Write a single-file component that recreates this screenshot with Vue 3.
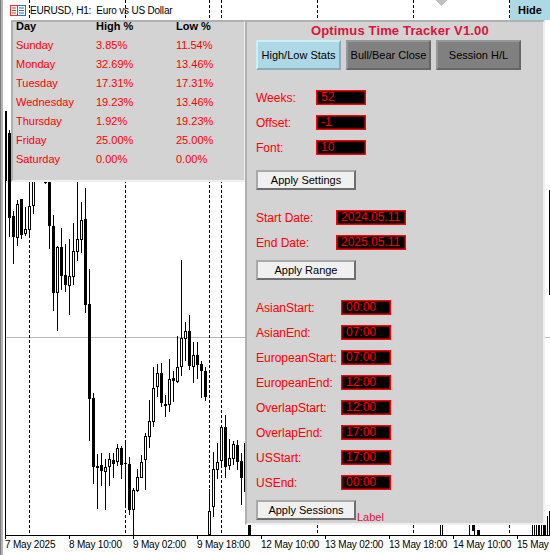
<script setup>
import { computed } from 'vue'

const raw = [
  [9,130,237,133,218,1],[13,211,264,216,237,1],[17,200,246,204,238,0],[21,199,239,199,235,1],
  [25,207,236,229,234,0],[29,175,235,206,230,0],[33,175,214,175,206,0],[45,181,184,181,183,1],
  [49,170,249,170,226,1],[53,215,311,226,293,1],[57,246,331,247,293,0],[61,228,290,247,276,1],
  [65,244,292,275,285,1],[69,239,315,276,286,0],[73,223,285,251,277,0],[77,175,261,239,252,0],
  [81,202,253,220,240,0],[85,188,313,219,305,1],[89,269,441,304,399,1],[93,393,484,398,467,1],
  [97,454,509,466,468,1],[101,453,486,465,471,1],[105,459,510,467,472,0],[109,453,486,459,467,0],
  [113,453,478,460,464,1],[117,444,466,448,462,0],[121,446,479,448,465,1],[125,443,505,463,464,1],
  [129,457,515,464,510,1],[133,488,535,490,510,0],[137,469,492,477,491,0],[141,455,478,462,478,0],
  [145,433,490,436,460,0],[149,400,448,421,437,0],[153,367,427,388,422,0],[157,364,397,373,387,0],
  [161,363,407,373,403,1],[165,395,417,404,406,1],[169,359,412,379,405,0],[173,371,402,378,381,1],
  [177,336,383,367,382,0],[181,260,376,338,367,0],[185,322,361,331,339,0],[189,315,370,331,366,1],
  [193,342,383,355,367,0],[197,342,379,355,365,1],[201,361,398,364,371,1],[205,367,401,371,397,1],
  [209,489,535,511,535,0],[213,452,517,469,507,0],[217,443,479,462,470,0],[221,425,468,427,461,0],
  [225,415,478,427,467,1],[229,439,470,458,466,0],[233,441,465,444,459,0],[237,440,470,445,462,1],
  [241,453,505,461,478,1],[245,436,498,443,492,1]
]
const candles = computed(() =>
  raw.map(([x, hi, lo, top, bottom, filled]) => ({ x, hi, lo, top, bottom, filled: !!filled }))
)
const dashes = [29, 125, 209, 221, 317, 413, 509]
const ticks = [5, 69, 133, 197, 261, 325, 389, 453, 517]
const axisLabels = ['7 May 2025', '8 May 10:00', '9 May 02:00', '9 May 18:00', '12 May 10:00', '13 May 02:00', '13 May 18:00', '14 May 10:00', '15 May']
const stripBars = [
  [248,525,3,10],[440,525,1,10],[442,525,1,10],[469,525,1,10],[472,525,3,6],[474,525,1,10],[477,530,3,5],
  [532,525,1,10],[534,525,1,10],[536,525,1,10],[538,525,2,10],[541,525,1,10],[543,525,3,10],[547,516,1,19],[549,511,1,24],[549,190,1,105]
]
const stats = [
  ['Sunday', '3.85%', '11.54%'],
  ['Monday', '32.69%', '13.46%'],
  ['Tuesday', '17.31%', '17.31%'],
  ['Wednesday', '19.23%', '13.46%'],
  ['Thursday', '1.92%', '19.23%'],
  ['Friday', '25.00%', '25.00%'],
  ['Saturday', '0.00%', '0.00%']
]
const settings = [['Weeks:', '52'], ['Offset:', '-1'], ['Font:', '10']]
const range = [['Start Date:', '2024.05.11'], ['End Date:', '2025.05.11']]
const sessions = [
  ['AsianStart:', '00:00'], ['AsianEnd:', '07:00'], ['EuropeanStart:', '07:00'], ['EuropeanEnd:', '12:00'],
  ['OverlapStart:', '12:00'], ['OverlapEnd:', '17:00'], ['USStart:', '17:00'], ['USEnd:', '00:00']
]
</script>

<template>
  <div class="screen">
    <svg class="chart" width="550" height="555" viewBox="0 0 550 555">
      <rect x="0" y="0" width="1" height="555" fill="#7a7a7a" />
      <rect x="1" y="0" width="2" height="555" fill="#b4b4b4" />
      <rect x="5" y="111" width="1" height="424" fill="#000" />
      <rect x="6" y="111" width="1" height="70" fill="#000" />
      <rect x="6" y="337" width="544" height="1" fill="#b8b8b8" />
      <line v-for="x in dashes" :key="x" :x1="x + 0.5" :x2="x + 0.5" y1="0" y2="535" stroke="#000" stroke-dasharray="3 2" />
      <g v-for="c in candles" :key="c.x">
        <rect :x="c.x" :y="c.hi" width="1" :height="c.lo - c.hi" fill="#000" />
        <rect v-if="c.filled" :x="c.x - 1" :y="c.top" width="3" :height="c.bottom - c.top" fill="#000" />
        <rect v-else :x="c.x - 0.5" :y="c.top + 0.5" width="2" :height="c.bottom - c.top - 1" fill="#fff" stroke="#000" />
      </g>
      <rect v-for="(b, i) in stripBars" :key="'b' + i" :x="b[0]" :y="b[1]" :width="b[2]" :height="b[3]" fill="#000" />
      <rect x="5" y="535" width="545" height="1" fill="#000" />
      <rect v-for="t in ticks" :key="'t' + t" :x="t" y="535" width="1" height="4" fill="#000" />
      <polygon points="436,0 447,0 441.5,6" fill="#c0c0c0" />
    </svg>

    <header class="symbol">
      <svg class="symbol-icon" width="16" height="11" viewBox="0 0 16 11">
        <rect x="0.5" y="0.5" width="7" height="10" fill="#fff" stroke="#e0392b" />
        <rect x="2" y="2.5" width="4" height="1" fill="#e0392b" />
        <rect x="2" y="5" width="4" height="1" fill="#e0392b" />
        <rect x="2" y="7.5" width="4" height="1" fill="#e0392b" />
        <rect x="7.5" y="0.5" width="8" height="10" fill="#fff" stroke="#2a6fc4" />
        <rect x="9" y="2.5" width="5" height="1" fill="#2a6fc4" />
        <rect x="9" y="5" width="5" height="1" fill="#2a6fc4" />
        <rect x="9" y="7.5" width="5" height="1" fill="#2a6fc4" />
      </svg>
      <span class="symbol-text">EURUSD, H1:&nbsp; Euro vs US Dollar</span>
    </header>

    <button class="hide">Hide</button>

    <section class="stats panel">
      <div class="stats-grid">
        <b>Day</b><b>High %</b><b>Low %</b>
        <template v-for="s in stats" :key="s[0]">
          <span>{{ s[0] }}</span><span>{{ s[1] }}</span><span>{{ s[2] }}</span>
        </template>
      </div>
    </section>

    <section class="tracker panel">
      <h1 class="title">Optimus Time Tracker V1.00</h1>
      <nav class="tabs">
        <button class="tab active">High/Low Stats</button>
        <button class="tab">Bull/Bear Close</button>
        <button class="tab">Session H/L</button>
      </nav>

      <div class="fields settings">
        <div v-for="f in settings" :key="f[0]" class="field">
          <label class="name">{{ f[0] }}</label><div class="value">{{ f[1] }}</div>
        </div>
      </div>
      <button class="apply after-settings">Apply Settings</button>

      <div class="fields range">
        <div v-for="f in range" :key="f[0]" class="field">
          <label class="name">{{ f[0] }}</label><div class="value wide">{{ f[1] }}</div>
        </div>
      </div>
      <button class="apply after-list">Apply Range</button>

      <div class="fields sessions">
        <div v-for="f in sessions" :key="f[0]" class="field">
          <label class="name">{{ f[0] }}</label><div class="value">{{ f[1] }}</div>
        </div>
      </div>
      <div class="last-row after-list">
        <button class="apply">Apply Sessions</button>
        <span class="note">Label</span>
      </div>
    </section>

    <footer class="time-axis">
      <span v-for="l in axisLabels" :key="l" class="time">{{ l }}</span>
    </footer>
  </div>
</template>

<style scoped>
.screen {
  position: relative;
  width: 550px;
  height: 555px;
  overflow: hidden;
  background: #fff;
  font-family: "Liberation Sans", Arial, sans-serif;
  font-size: 11px;
  color: #000;
}
.chart {
  position: absolute;
  left: 0;
  top: 0;
  shape-rendering: crispEdges;
}
.symbol {
  position: absolute;
  left: 10px;
  top: 5px;
  display: flex;
  align-items: center;
  gap: 4px;
  height: 11px;
}
.symbol-icon { display: block; flex: none; }
.symbol-text {
  font-size: 10px;
  line-height: 11px;
  letter-spacing: -0.2px;
  white-space: nowrap;
}
.hide {
  position: absolute;
  left: 510px;
  top: 0;
  width: 40px;
  height: 20px;
  padding: 0;
  border: 0;
  background: #add8e6;
  font: bold 11px "Liberation Sans", Arial, sans-serif;
  color: #000;
}
.panel {
  position: absolute;
  box-sizing: border-box;
  background: #d3d3d3;
  border-style: solid;
  border-width: 2px;
  border-color: #b0b0b0 #efefef #efefef #b0b0b0;
}
.stats {
  left: 11px;
  top: 20px;
  width: 235px;
  height: 162px;
  padding-left: 3px;
}
.stats-grid {
  display: grid;
  grid-template-columns: 80px 80px 60px;
  grid-auto-rows: 13px;
  row-gap: 6px;
  margin-top: -2px;
  line-height: 13px;
  color: #f00;
}
.stats-grid b { color: #000; }
.tracker {
  left: 245px;
  top: 20px;
  width: 300px;
  height: 505px;
  padding-left: 9px;
  display: flex;
  flex-direction: column;
  align-items: flex-start;
}
.title {
  margin: 0 0 0 55px;
  height: 18px;
  font-size: 13px;
  line-height: 18px;
  letter-spacing: 0.15px;
  font-weight: bold;
  color: #dc143c;
  white-space: nowrap;
}
.tabs {
  display: flex;
  gap: 5px;
}
.tab {
  box-sizing: border-box;
  width: 85px;
  height: 30px;
  padding: 0;
  border-style: solid;
  border-width: 2px;
  border-color: #979797 #666 #666 #979797;
  background: #808080;
  font: 11px "Liberation Sans", Arial, sans-serif;
  color: #000;
}
.tab.active {
  background: #add8e6;
  border-color: #c8f0f8 #8aacb8 #8aacb8 #c8f0f8;
}
.fields {
  display: flex;
  flex-direction: column;
  gap: 10px;
}
.settings { margin-top: 20px; --name: 60px; }
.range { margin-top: 20px; --name: 80px; }
.sessions { margin-top: 20px; --name: 85px; }
.field {
  display: flex;
  align-items: center;
  height: 15px;
}
.name {
  width: var(--name);
  flex: none;
  height: 15px;
  padding-top: 1px;
  box-sizing: border-box;
  font-size: 12px;
  line-height: 15px;
  color: #f00;
  white-space: nowrap;
}
.value {
  box-sizing: border-box;
  width: 50px;
  height: 15px;
  padding-left: 5px;
  background: #000;
  box-shadow: inset 0 0 0 1.5px #f00;
  color: #f00;
  font-size: 12px;
  line-height: 15px;
}
.value.wide { width: 70px; }
.apply {
  box-sizing: border-box;
  width: 100px;
  height: 20px;
  padding: 0;
  border-style: solid;
  border-width: 2px;
  border-color: #a9a9a9 #6e6e6e #6e6e6e #a9a9a9;
  background: #f0f0f0;
  font: 11px "Liberation Sans", Arial, sans-serif;
  color: #000;
}
.after-settings { margin-top: 15px; }
.after-list { margin-top: 10px; }
.last-row {
  display: flex;
  align-items: flex-end;
  gap: 1px;
}
.note {
  font-size: 11px;
  line-height: 12px;
  margin-bottom: -3px;
  color: #dc143c;
}
.time-axis {
  position: absolute;
  left: 5px;
  top: 538px;
  display: flex;
}
.time {
  flex: none;
  width: 64px;
  font-size: 10px;
  line-height: 14px;
  letter-spacing: -0.2px;
  white-space: nowrap;
}
</style>
